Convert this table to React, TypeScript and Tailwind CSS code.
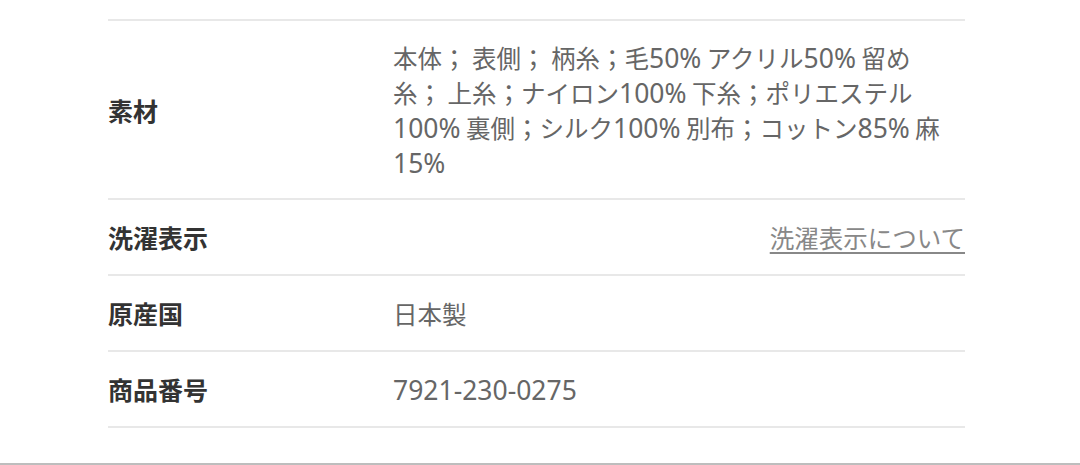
import React from "react";

const font = { fontFamily: '"Noto Sans CJK JP", "Noto Sans", sans-serif' };

function Mixed({ text }: { text: string }) {
  const parts = text.split(/([0-9%\-]+)/);
  return (
    <>
      {parts.map((p, i) =>
        /^[0-9%\-]+$/.test(p) ? (
          <span key={i} className="text-[26.5px] leading-none" style={{ fontFamily: '"Noto Sans", sans-serif' }}>
            {p}
          </span>
        ) : (
          <React.Fragment key={i}>{p}</React.Fragment>
        )
      )}
    </>
  );
}

function Row({ label, children, first }: { label: string; children: React.ReactNode; first?: boolean }) {
  return (
    <div className={`flex items-center pt-5 ${first ? "border-t-2 pb-[18px]" : "pb-[19px]"} border-b-2 border-[#e8e8e8]`}>
      <div className="w-[285px] shrink-0 text-[25px] font-bold text-[#333] leading-[35px]">{label}</div>
      <div className="flex-1 text-[24.5px] text-[#666] leading-[35px]">{children}</div>
    </div>
  );
}

export default function App() {
  return (
    <div className="w-[1080px] h-[465px] bg-white flex flex-col" style={font}>
      <div className="flex-1 pt-[19px] pl-[108px] pr-[115px]">
        <Row label="素材" first>
          <div className="w-[560px] -mt-[1px]">
            <Mixed text="本体； 表側； 柄糸；毛50% アクリル50% 留め糸； 上糸；ナイロン100% 下糸；ポリエステル100% 裏側；シルク100% 別布；コットン85% 麻15%" />
          </div>
        </Row>
        <Row label="洗濯表示">
          <div className="flex justify-end">
            <span className="text-[#888] underline underline-offset-[4px] decoration-[1.5px]">洗濯表示について</span>
          </div>
        </Row>
        <Row label="原産国">日本製</Row>
        <Row label="商品番号">
          <Mixed text="7921-230-0275" />
        </Row>
      </div>
      <div className="h-[2px] bg-[#bdbdbd]" />
    </div>
  );
}
